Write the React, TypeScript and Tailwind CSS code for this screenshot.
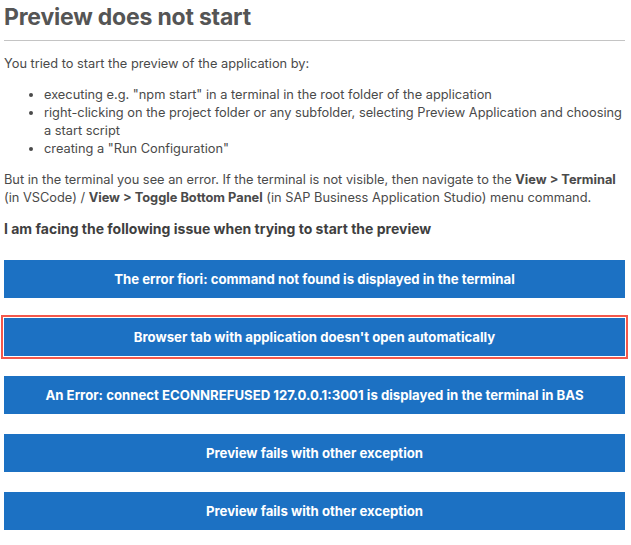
const issues = [
  { label: "The error fiori: command not found is displayed in the terminal", active: false },
  { label: "Browser tab with application doesn't open automatically", active: true },
  { label: "An Error: connect ECONNREFUSED 127.0.0.1:3001 is displayed in the terminal in BAS", active: false },
  { label: "Preview fails with other exception", active: false },
  { label: "Preview fails with other exception", active: false },
]

export default function App() {
  return (
    <div className="w-[631px] h-[545px] bg-white pl-1 pr-[6px] text-[12.8px] leading-[18px] text-[#4a4a4a] [font-family:Inter,'Liberation_Sans',sans-serif]">
      <h1 className="pt-[2px] pb-[8px] border-b border-[#c4c4c4] text-[23px] leading-[30px] font-bold text-[#555555] tracking-[-0.2px]">
        Preview does not start
      </h1>

      <p className="mt-[14px]">You tried to start the preview of the application by:</p>

      <ul className="mt-[13px] pl-[40px] list-disc">
        <li>executing e.g. "npm start" in a terminal in the root folder of the application</li>
        <li>right-clicking on the project folder or any subfolder, selecting Preview Application and choosing a start script</li>
        <li>creating a "Run Configuration"</li>
      </ul>

      <p className="mt-[13px]">
        But in the terminal you see an error. If the terminal is not visible, then navigate to the <b className="font-bold">View &gt; Terminal</b> (in VSCode) / <b className="font-bold">View &gt; Toggle Bottom Panel</b> (in SAP Business Application Studio) menu command.
      </p>

      <h2 className="mt-[12px] text-[14px] leading-[20px] font-bold text-[#3f3f3f]">
        I am facing the following issue when trying to start the preview
      </h2>

      <div className="mt-[21px] flex flex-col gap-[20px]">
        {issues.map((it, i) => (
          <button
            key={i}
            className={
              "h-[38px] w-full bg-[#1c71c3] text-white text-[13.2px] font-bold " +
              (it.active ? "outline-[2.5px] outline-solid outline-[#f4584b] outline-offset-[1px] ring-1 ring-white" : "")
            }
          >
            {it.label}
          </button>
        ))}
      </div>
    </div>
  )
}
